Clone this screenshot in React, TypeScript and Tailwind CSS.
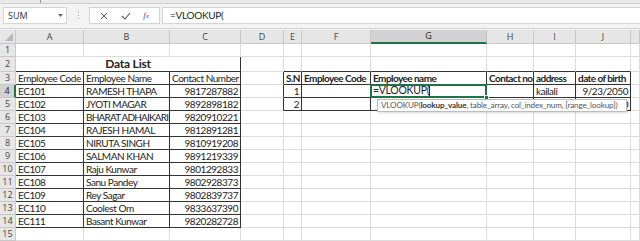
import React from "react";

const cols = ["A", "B", "C", "D", "E", "F", "G", "H", "I", "J", ""];

type CellData = { t?: React.ReactNode; align?: "l" | "r" | "c"; bold?: boolean; tight?: boolean };

const codes = ["EC101","EC102","EC103","EC104","EC105","EC106","EC107","EC108","EC109","EC110","EC111"];
const names = ["RAMESH THAPA","JYOTI MAGAR","BHARAT ADHAIKARI","RAJESH HAMAL","NIRUTA SINGH","SALMAN KHAN","Raju Kunwar","Sanu Pandey","Rey Sagar","Coolest Om","Basant Kunwar"];
const phones = ["9817287882","9892898182","9820910221","9812891281","9810919208","9891219339","9801292833","9802928373","9802839737","9833637390","9820282728"];

function getCell(r: number, c: number): CellData {
  if (r === 3) {
    const h: Record<number, CellData> = {
      0: { t: "Employee Code" },
      1: { t: "Employee Name" },
      2: { t: "Contact Number" },
      4: { t: "S.N", bold: true },
      5: { t: "Employee Code", bold: true },
      6: { t: "Employee name", bold: true },
      7: { t: "Contact no", bold: true },
      8: { t: "address", bold: true },
      9: { t: "date of birth", bold: true },
    };
    return h[c] || {};
  }
  if (r >= 4 && r <= 14) {
    const i = r - 4;
    if (c === 0) return { t: codes[i] };
    if (c === 1) return { t: names[i], tight: names[i].length > 14 };
    if (c === 2) return { t: phones[i], align: "r" };
  }
  if (r === 4) {
    if (c === 4) return { t: "1", align: "r" };
    if (c === 8) return { t: "kailali" };
    if (c === 9) return { t: "9/23/2050", align: "r" };
  }
  if (r === 5) {
    if (c === 4) return { t: "2", align: "r" };
    if (c === 9) return { t: "1/10/2050", align: "r" };
  }
  return {};
}

function inT(r: number, c: number) {
  if (r >= 3 && r <= 14 && c >= 0 && c <= 2) return true;
  if (r >= 3 && r <= 5 && c >= 4 && c <= 9) return true;
  return false;
}

const rows = Array.from({ length: 15 }, (_, i) => i + 1);

export default function App() {
  const font = { fontFamily: "Lato, 'Open Sans', sans-serif" };
  return (
    <div className="w-[640px] h-[241px] overflow-hidden bg-white flex flex-col" style={{ fontFamily: "'Open Sans', 'Noto Sans', sans-serif" }}>
      {/* ribbon remnant */}
      <div className="h-[4px] bg-[#e9e9e9] border-b border-[#d0d0d0] relative">
        <div className="absolute left-[40px] top-0 w-px h-[3px] bg-[#999]" />
      </div>
      {/* formula bar */}
      <div className="h-[27px] bg-[#f3f3f3] flex items-center pl-[3px] border-b border-[#d4d4d4]">
        <div className="w-[64px] h-[17px] bg-white border border-[#d4d4d4] flex items-center justify-between pl-[4px] pr-[3px] text-[9px] text-[#333]">
          <span>SUM</span>
          <svg width="5" height="3" viewBox="0 0 5 3"><path d="M0 0 L5 0 L2.5 3 Z" fill="#666" /></svg>
        </div>
        <div className="w-[22px] flex justify-center">
          <div className="flex flex-col gap-[2px]">
            <div className="w-px h-px bg-[#aaa]" />
            <div className="w-px h-px bg-[#aaa]" />
            <div className="w-px h-px bg-[#aaa]" />
          </div>
        </div>
        <div className="w-[71px] h-[17px] bg-white border border-[#d4d4d4] flex items-center justify-around px-[4px]">
          <svg width="8" height="8" viewBox="0 0 8 8"><path d="M1 1 L7 7 M7 1 L1 7" stroke="#555" strokeWidth="1" /></svg>
          <svg width="10" height="8" viewBox="0 0 10 8"><path d="M1 4 L4 7 L9 1" stroke="#555" strokeWidth="1.1" fill="none" /></svg>
          <span className="text-[9px] italic text-[#555]" style={{ fontFamily: "'Liberation Serif', serif" }}>f<span className="text-[7px]">x</span></span>
        </div>
        <div className="ml-[2px] flex-1 h-[17px] bg-white border border-[#d4d4d4] border-r-0 flex items-center pl-[7px] text-[10px] tracking-[-0.3px] text-[#222]" style={font}>
          =VLOOKUP(
        </div>
      </div>
      {/* gap */}
      <div className="h-[1px] bg-[#f3f3f3]" />
      {/* grid */}
      <div className="grid grid-cols-[16px_68px_86px_71px_43px_18px_69px_116px_47px_42px_55px_9px] text-[#222]" style={font}>
        {/* header row */}
        <div className="h-[14px] bg-[#e6e6e6] border-r border-b border-[#c8c8c8] relative">
          <svg className="absolute right-[2px] bottom-[2px]" width="8" height="8" viewBox="0 0 8 8"><path d="M8 0 L8 8 L0 8 Z" fill="#b8b8b8" /></svg>
        </div>
        {cols.map((l, i) => (
          <div
            key={l + i}
            className={
              l === "G"
                ? "h-[14px] bg-[#d2d2d2] border-r border-[#bdbdbd] border-b-2 border-b-[#217346] flex items-center justify-center text-[9px] text-[#222]"
                : "h-[14px] bg-[#e6e6e6] border-r border-b border-[#c8c8c8] flex items-center justify-center text-[9px] text-[#444]"
            }
            style={{ fontFamily: "'Open Sans', sans-serif" }}
          >
            {l}
          </div>
        ))}
        {rows.map((r) => {
          const h = r === 2 ? "h-[15px]" : "h-[13px]";
          const cells: React.ReactNode[] = [];
          cells.push(
            <div
              key={"h" + r}
              className={
                r === 4
                  ? `${h} bg-[#d2d2d2] border-r-2 border-r-[#217346] border-b border-b-[#c8c8c8] flex items-center justify-center text-[9px] text-[#222]`
                  : `${h} bg-[#e6e6e6] border-r border-b border-[#c8c8c8] flex items-center justify-center text-[9px] text-[#444]`
              }
              style={{ fontFamily: "'Open Sans', sans-serif" }}
            >
              {r}
            </div>
          );
          if (r === 2) {
            cells.push(
              <div key="merged" className="col-span-3 h-[15px] border-r border-r-[#333] border-b border-b-[#333] flex items-center justify-center text-[12px] font-bold tracking-[-0.2px]">
                Data List
              </div>
            );
          }
          for (let c = 0; c < 11; c++) {
            if (r === 2 && c <= 2) continue;
            const d = getCell(r, c);
            const dr = inT(r, c) || inT(r, c + 1);
            const db = inT(r, c) || inT(r + 1, c);
            const rb = dr ? "border-r-[#333]" : "border-r-[#dcdcdc]";
            const bb = db ? "border-b-[#333]" : "border-b-[#dcdcdc]";
            const al = d.align === "r" ? "justify-end pr-[2px]" : "justify-start pl-[2px]";
            const isActive = r === 4 && c === 6;
            const tr = d.bold ? "font-bold tracking-[-0.55px]" : d.tight ? "tracking-[-0.8px]" : "tracking-[-0.45px]";
            cells.push(
              <div
                key={r + "-" + c}
                className={`${h} border-r border-b ${rb} ${bb} flex items-center ${al} text-[10px] whitespace-nowrap ${tr} ${isActive ? "relative overflow-visible" : "overflow-hidden"}`}
              >
                {isActive ? (
                  <>
                    <div className="absolute left-[-1px] top-[-1px] right-[-1px] bottom-[-1px] border-2 border-[#217346] bg-white z-10 flex items-center pl-[1px] text-[10.5px] font-normal tracking-[-0.3px]">
                      =VLOOKUP(<span className="inline-block w-px h-[10px] bg-[#222]" />
                    </div>
                    <div className="absolute right-[-3px] bottom-[-3px] w-[5px] h-[5px] bg-[#217346] border border-white z-20" />
                    <div
                      className="absolute left-[6px] top-[14px] h-[13px] w-[250px] bg-white border border-[#bcbcbc] shadow-[1px_1px_2px_rgba(0,0,0,0.15)] z-30 flex items-center pl-[3px] text-[8.1px] tracking-[-0.15px] font-normal text-[#555] whitespace-nowrap overflow-hidden"
                      style={{ fontFamily: "Lato, 'Open Sans', sans-serif" }}
                    >
                      VLOOKUP(<b className="font-bold text-[#333]">lookup_value</b>, table_array, col_index_num, [range_lookup])
                    </div>
                  </>
                ) : (
                  d.t
                )}
              </div>
            );
          }
          return <React.Fragment key={r}>{cells}</React.Fragment>;
        })}
      </div>
    </div>
  );
}
